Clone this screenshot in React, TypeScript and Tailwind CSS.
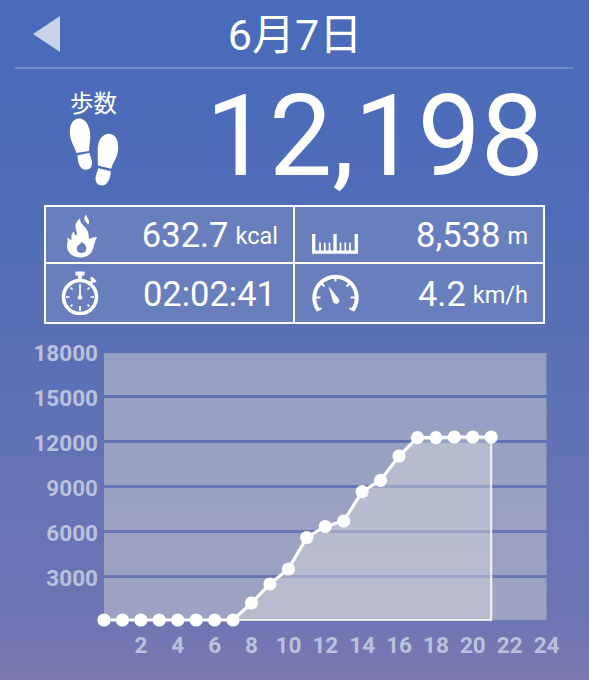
import type { ReactNode } from "react";

interface StatProps {
  icon: ReactNode;
  value: string;
  unit?: string;
  className?: string;
}

const Stat = ({ icon, value, unit, className = "pr-[15px]" }: StatProps) => {
  return (
    <div className={`flex items-center justify-between bg-[#697fbd] pl-4 ${className}`}>
      {icon}
      <p className="flex items-baseline whitespace-nowrap pt-0.5 text-[34.500px] leading-none">
        {value}
        {unit && <span className="relative -top-[3px] ml-[7px] text-[23.500px]">{unit}</span>}
      </p>
    </div>
  );
};

const Footprints = () => (
  <svg className="-ml-px" width="50" height="68" viewBox="0 0 50 68" fill="currentColor">
    <path d="M10 .5C16.500 .5 20 7 21 14.500c.9 7-1 13-1 18.500L7.500 35C5.500 28 .8 23 .8 14 .8 6 4.500.5 10 .5Z" />
    <path d="M8.300 37.500 20.500 34.700c.5 3.500 2.500 6.500 2.500 9.800 0 4.800-2.300 7.200-6 7.200-6.500 0-8-7.200-8.700-14.200Z" />
    <path d="M40.500 15.700C33 15.500 29 22.500 28.700 31c-.2 6 .3 11.500.1 16.500l13.400 3.200C43.500 45 49.200 39 49.200 29.500 49.200 21.500 46 16.200 40.500 15.700Z" />
    <path d="m29.300 50.200 12.500 3c-.3 6.500-3 14.300-8.700 14.300-4.600 0-6.600-3-6.600-7 0-4 2-6.300 2.800-10.300Z" />
  </svg>
);

const Flame = () => (
  <svg className="ml-1 mt-0.5" width="34" height="44" viewBox="0 0 34 44" fill="currentColor" fillRule="evenodd">
    <path d="M20.500.5c-.5 4 4.500 5 1.800 10.200C20 7.500 15.500 5 20.500.5Z" />
    <path d="M14 4.500C13 10 22 14 22.500 20c.3 2 0 4 1 5C25 24 26.500 22.500 31.500 23.500 28.500 26 28.500 31 27 35c-2 5.500-6.500 8.500-12 8.500C6 43.500 1 38 1 32c0-3 1.500-5 0-8.500 2 1 3 2 4.500 2.500C5.500 23 4.500 20 8 17.500c0 2.500 1 3.500 2.500 4C12 17 8 14 10 9.500 11 7 12.500 6 14 4.500ZM15.500 28c-.5 2-4.700 3-4.700 6.500 0 3 2 4.500 4.700 4.500s4.800-1.500 4.800-4.500c0-2.500-1.300-4.500-4.800-6.500Z" />
  </svg>
);

const Stopwatch = () => (
  <svg className="-ml-px" width="38" height="44" viewBox="0 0 38 44" fill="none" stroke="currentColor">
    <path d="M14.500 2.500h9M19 3v6" strokeWidth="4" />
    <path d="m29.500 12 3-3" strokeWidth="3" />
    <path d="m30 6.500 4.500 4.500" strokeWidth="3" />
    <circle cx="19" cy="26" r="16.500" strokeWidth="3.600" />
    <path d="M19 13v12M19 35v5M5 26h3.500M29.500 26H33M9.500 16.500l2 2M28.500 16.500l-2 2M9.500 35.500l2-2M28.500 35.500l-2-2" strokeWidth="1.700" />
    <circle cx="19" cy="26.500" r="2.300" fill="currentColor" stroke="none" />
  </svg>
);

const Ruler = () => (
  <svg className="ml-px mt-[19px]" width="46" height="20" viewBox="0 0 46 20" fill="none" stroke="currentColor">
    <path d="M1.700 0v18.200h42.600V0M23 0v18" strokeWidth="3.300" />
    <path d="M8 8.500V17M12.800 8.500V17M17.500 8.500V17M28.500 8.500V17M33.300 8.500V17M38 8.500V17" strokeWidth="1.700" />
  </svg>
);

const Gauge = () => (
  <svg className="ml-px overflow-visible" width="46" height="38" viewBox="0 0 46 38" fill="none" stroke="currentColor">
    <path d="M6.500 36.500A21.200 21.200 0 1 1 40.500 36.500" strokeWidth="4" />
    <path d="M23.500 2.500v5M3 23.500h5.500M44 23.500h-5.500M9 9l3.500 3.500M38 9l-3.500 3.500M5.500 36.500l4-2.300M41.500 36.500l-4-2.300" strokeWidth="2" />
    <path d="M16.500 12 26.800 25c1 2.500.2 4.200-1.800 4.700-2 .4-3.600-.5-4.200-2.700Z" fill="currentColor" stroke="none" />
  </svg>
);

const yLabels = ["18000", "15000", "12000", "9000", "6000", "3000"];
const xLabels = [2, 4, 6, 8, 10, 12, 14, 16, 18, 20, 22, 24];
const bands = [0, 45, 90, 135, 180, 225];

// plotted height of each hour, top of the chart is 0
const hours = [
  267, 267, 267, 267, 267, 267, 267, 267, 250, 231, 216, 184.5, 173.5, 168, 138.7, 127.3, 103, 84.7, 84.7, 84,
  84, 84,
];
const step = 442.5 / 24;
const line = hours.map((y, i) => `${i * step},${y}`).join(" ");

const Chart = () => {
  return (
    <div>
      <div className="flex">
        <div className="-mt-[11px] flex w-[98px] flex-col text-right">
          {yLabels.map((label) => (
            <span key={label} className="h-[45px] leading-[22px]">
              {label}
            </span>
          ))}
        </div>
        <svg className="ml-1.5 overflow-visible" width="443" height="267" viewBox="0 0 443 267">
          {bands.map((y) => (
            <rect key={y} y={y} width="442.500" height="42" fill="#c9cbd0" fillOpacity="0.52" />
          ))}
          <polygon points={`${line} ${21 * step},267`} fill="#dddde0" fillOpacity="0.44" />
          <path d={`M${7 * step} 267H${21 * step}V84`} fill="none" stroke="#fff" strokeOpacity="0.8" strokeWidth="2.200" />
          <polyline points={line} fill="none" stroke="#fff" strokeWidth="3.200" />
          {hours.map((y, i) => (
            <circle key={i} cx={i * step} cy={y} r="6.600" fill="#fff" />
          ))}
        </svg>
      </div>
      <div className="ml-[122.500px] mt-3.5 flex w-[442.500px] text-center leading-[22px]">
        {xLabels.map((label) => (
          <span key={label} className="min-w-0 flex-1">
            {label}
          </span>
        ))}
      </div>
    </div>
  );
};

const App = () => {
  return (
    <div className="h-[680px] w-[589px] overflow-hidden bg-[linear-gradient(#496bba_0%,#4f6cb7_29%,#5b70b5_52%,#6574b5_73%,#6e75b4_91%,#7c78b0_100%)] font-['Roboto','Noto_Sans_CJK_JP',sans-serif] text-white">
      <header className="mx-[15px] flex h-[69px] items-center border-b-2 border-white/20">
        <svg className="ml-[18px]" width="27" height="36" viewBox="0 0 27 36">
          <path d="M27 0v36L0 18Z" fill="#c8d3ea" />
        </svg>
        <h1 className="flex-1 pr-[44px] pt-[3px] text-center text-[43px] leading-none">6月7日</h1>
      </header>

      <section className="flex h-[136px] justify-between pl-[70px] pr-[45px]">
        <div className="flex flex-col pt-[22px]">
          <span className="whitespace-nowrap text-[23.500px] leading-[27px]">歩数</span>
          <Footprints />
        </div>
        <p className="pt-3 text-[112.500px] leading-none">12,198</p>
      </section>

      <section className="ml-11 grid h-[119px] w-[501px] grid-cols-[247px_248px] grid-rows-[55px_58px] gap-0.5 border-2 border-white bg-white">
        <Stat icon={<Flame />} value="632.7" unit="kcal" />
        <Stat icon={<Ruler />} value="8,538" unit="m" />
        <Stat icon={<Stopwatch />} value="02:02:41" className="pr-[17px]" />
        <Stat icon={<Gauge />} value="4.2" unit="km/h" />
      </section>

      <section className="pt-[29px] text-[22.500px] font-bold text-[#bac1dc]">
        <Chart />
      </section>
    </div>
  );
};

export default App;
